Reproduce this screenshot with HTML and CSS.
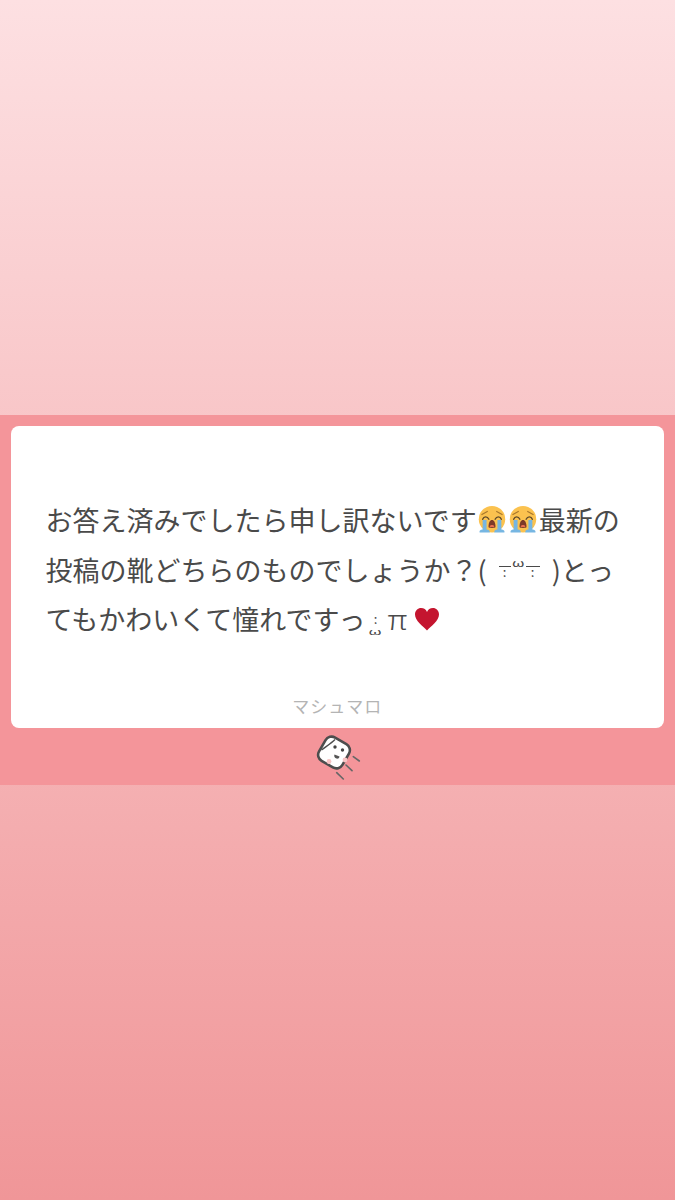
FILE: index.html
```html
<!DOCTYPE html>
<html lang="ja">
  <head>
    <meta charset="utf-8">
    <title>マシュマロ</title>
    <link rel="stylesheet" href="styles.css">
  </head>
  <body>
    <svg class="defs" width="0" height="0">
      <symbol id="cry" viewBox="0 0 36 36">
        <circle cx="18" cy="17" r="17" fill="#fbc24f"/>
        <path d="M5 11l7-4M31 11l-7-4" fill="none" stroke="#a8772c" stroke-width="1.500" stroke-linecap="round"/>
        <path d="M6 17c1.500-4 6-4 8 0M22 17c2-4 6.500-4 8 0" fill="none" stroke="#5f4a2a" stroke-width="1.800" stroke-linecap="round"/>
        <path d="M13.500 27c0-6 2-9 4.500-9s4.500 3 4.500 9c0 1.500-9 1.500-9 0z" fill="#7d3a28"/>
        <path d="M15 26c1-2 5-2 6 0 0 1.500-6 1.500-6 0z" fill="#ea6f4e"/>
        <path d="M6 18h5v13h-5zM25 18h5v13h-5zM2 32c1-1 3-2 5-2h3c2 0 4 1 5 2v2H2zM21 32c1-1 3-2 5-2h3c2 0 4 1 5 2v2H21z" fill="#76b6e2"/>
      </symbol>
    </svg>
    <div class="top"></div>
    <section class="band">
      <div class="card">
        <p class="msg">お答え済みでしたら申し訳ないです<svg class="emoji"><use href="#cry"/></svg><svg class="emoji"><use href="#cry"/></svg>最新の投稿の靴どちらのものでしょうか？<span class="paren-l">(</span><span class="eye">:</span><span class="mouth">ω</span><span class="eye eye-r">:</span><span class="paren-r">)</span>とってもかわいくて憧れですっ<span class="kao"><span>:</span><span class="kao-mouth">ω</span></span><span class="pi">π</span><svg class="heart" viewBox="0 0 26 24"><path d="M13 23.500C9 19 1 14 1 7.500 1 3.500 4 1 7 1c3 0 5 1.500 6 4 1-2.500 3-4 6-4 3 0 6 2.500 6 6.500C25 14 17 19 13 23.500z" fill="#c4152f"/></svg></p>
        <div class="brand">マシュマロ</div>
      </div>
      <svg class="logo" viewBox="0 0 50 50">
        <rect x="7.500" y="6" width="27" height="27" rx="7" transform="rotate(30 21 19.500)" fill="#fff" stroke="#4d4d4d" stroke-width="2.600"/>
        <path d="M8.500 17C13 13.500 18 10.500 22 6.500" fill="none" stroke="#4d4d4d" stroke-width="1.400"/>
        <circle cx="22" cy="14" r="1.700" fill="#444"/>
        <circle cx="29.500" cy="17" r="1.700" fill="#444"/>
        <circle cx="16" cy="28.500" r="2.400" fill="#f6c3c3"/>
        <circle cx="32" cy="27" r="2.400" fill="#f6c3c3"/>
        <path d="M21.500 21.500l5 2c-.5 4-6.500 2-5-2z" fill="#555"/>
        <path d="M40.300 23.700l6 4.300M33 32l6 5.700M23.700 39.700l6.600 6.300" stroke="#666" stroke-width="1.600" stroke-linecap="round"/>
      </svg>
    </section>
    <div class="bottom"></div>
  </body>
</html>
```
FILE: styles.css
```css
html, body {
  margin: 0;
  padding: 0;
}
body {
  display: flex;
  flex-direction: column;
  width: 675px;
  height: 1200px;
  overflow: hidden;
  background: linear-gradient(to bottom, #fde0e2, #f09698);
  font-family: "Noto Sans CJK JP", "Noto Sans", sans-serif;
}
.defs {
  position: absolute;
}
.top {
  height: 415px;
}
.bottom {
  flex: 1;
}
.band {
  position: relative;
  box-sizing: border-box;
  height: 370px;
  padding: 11px 11px 0;
  background: #f4959a;
}
.card {
  box-sizing: border-box;
  display: flex;
  flex-direction: column;
  justify-content: space-between;
  height: 302px;
  padding: 69px 35px 10px 34.500px;
  background: #fff;
  border-radius: 8px;
}
.msg {
  margin: 0;
  font-size: 27px;
  line-height: 49.500px;
  color: #4a4a4a;
}
.emoji {
  width: 28px;
  height: 28px;
  margin: 0 1.500px;
  vertical-align: -3px;
}
.heart {
  width: 26px;
  height: 24px;
  margin-left: 8px;
  vertical-align: -1px;
}
.paren-l {
  margin-right: 12px;
}
.paren-r {
  margin-left: 12px;
}
.eye {
  display: inline-block;
  width: 12px;
  border-top: 1.500px solid #4a4a4a;
  font-size: 13px;
  line-height: 10px;
  text-align: center;
  vertical-align: 4px;
}
.eye-r {
  width: 14px;
}
.mouth {
  display: inline-block;
  width: 15px;
  font-size: 16px;
  line-height: 1;
  text-align: center;
  transform: scaleY(.65);
  vertical-align: 12px;
}
.kao {
  display: inline-flex;
  flex-direction: column;
  align-items: center;
  width: 10px;
  margin-left: 5px;
  font-size: 13px;
  line-height: 13px;
  vertical-align: 6px;
}
.kao-mouth {
  transform: scaleX(1.3) scaleY(.6);
}
.pi {
  display: inline-block;
  margin-left: 9px;
  line-height: 1;
  font-weight: 300;
  transform: scaleX(1.2);
}
.brand {
  text-align: center;
  font-size: 17px;
  line-height: 24px;
  letter-spacing: 1px;
  color: #b4b4b4;
}
.logo {
  position: absolute;
  left: 313px;
  top: 318px;
  width: 50px;
  height: 50px;
}
```
